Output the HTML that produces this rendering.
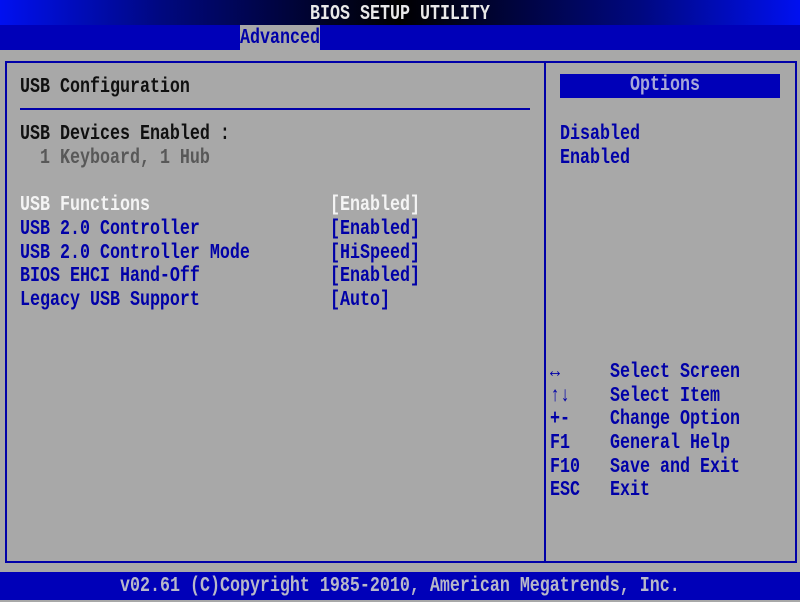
<!DOCTYPE html>
<html><head><style>
*{margin:0;padding:0}
body{width:800px;height:600px;background:#a8a8a8;position:relative;overflow:hidden;font-family:"Liberation Mono",monospace;font-weight:bold;font-size:16.67px}
.t{position:absolute;height:24px;line-height:24px;white-space:pre;transform:scaleY(1.25);transform-origin:50% 50%;margin-top:2px}
.b{color:#0000a8}.k{color:#101010}.w{color:#f4f4f4}.g{color:#585858}
</style></head><body>
<div style="position:absolute;left:0;top:0;width:800px;height:25px;background:linear-gradient(90deg,#0010f0 0%,#000880 20%,#000 50%,#000880 80%,#0010f0 100%)"></div>
<div class="t" style="left:310px;top:1px;color:#e8e8e8">BIOS SETUP UTILITY</div>
<div style="position:absolute;left:0;top:25px;width:800px;height:25px;background:#0000b8"></div>
<div style="position:absolute;left:240px;top:25px;width:80px;height:25px;background:#a8a8a8"></div>
<div class="t b" style="left:240px;top:25px">Advanced</div>
<div style="position:absolute;left:5px;top:61px;width:788px;height:498px;border:2px solid #0000a8"></div>
<div style="position:absolute;left:544px;top:61px;width:2px;height:500px;background:#0000a8"></div>
<div style="position:absolute;left:20px;top:108px;width:510px;height:2px;background:#0000a8"></div>
<div style="position:absolute;left:560px;top:74px;width:220px;height:24px;background:#0000b8"></div>
<div class="t" style="left:630px;top:72px;color:#a8a8d8">Options</div>
<div class="t k" style="left:20px;top:74px">USB Configuration</div>
<div class="t k" style="left:20px;top:121px">USB Devices Enabled :</div>
<div class="t g" style="left:40px;top:145px">1 Keyboard, 1 Hub</div>
<div class="t w" style="left:20px;top:192px">USB Functions</div>
<div class="t w" style="left:330px;top:192px">[Enabled]</div>
<div class="t b" style="left:20px;top:216px">USB 2.0 Controller</div>
<div class="t b" style="left:330px;top:216px">[Enabled]</div>
<div class="t b" style="left:20px;top:240px">USB 2.0 Controller Mode</div>
<div class="t b" style="left:330px;top:240px">[HiSpeed]</div>
<div class="t b" style="left:20px;top:263px">BIOS EHCI Hand-Off</div>
<div class="t b" style="left:330px;top:263px">[Enabled]</div>
<div class="t b" style="left:20px;top:287px">Legacy USB Support</div>
<div class="t b" style="left:330px;top:287px">[Auto]</div>
<div class="t b" style="left:560px;top:121px">Disabled</div>
<div class="t b" style="left:560px;top:145px">Enabled</div>
<div class="t b" style="left:550px;top:359px">↔</div>
<div class="t b" style="left:610px;top:359px">Select Screen</div>
<div class="t b" style="left:550px;top:383px">↑↓</div>
<div class="t b" style="left:610px;top:383px">Select Item</div>
<div class="t b" style="left:550px;top:406px">+-</div>
<div class="t b" style="left:610px;top:406px">Change Option</div>
<div class="t b" style="left:550px;top:430px">F1</div>
<div class="t b" style="left:610px;top:430px">General Help</div>
<div class="t b" style="left:550px;top:454px">F10</div>
<div class="t b" style="left:610px;top:454px">Save and Exit</div>
<div class="t b" style="left:550px;top:477px">ESC</div>
<div class="t b" style="left:610px;top:477px">Exit</div>
<div style="position:absolute;left:0;top:572px;width:800px;height:28px;background:#0000b8"></div>
<div class="t" style="left:120px;top:573px;color:#b8b8c8">v02.61 (C)Copyright 1985-2010, American Megatrends, Inc.</div>
</body></html>
